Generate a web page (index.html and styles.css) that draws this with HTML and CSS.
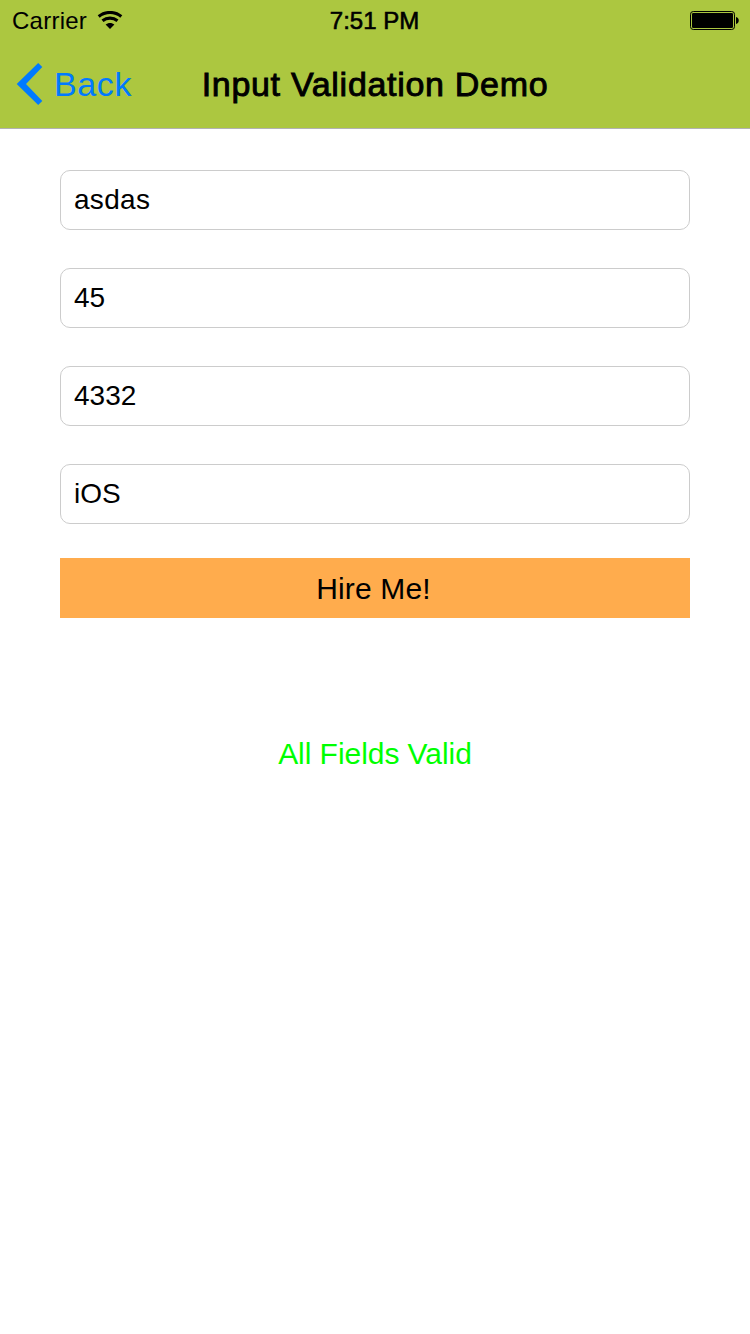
FILE: index.html
```html
<!DOCTYPE html>
<html lang="en">
<head>
<meta charset="utf-8">
<title>Input Validation Demo</title>
<link rel="stylesheet" href="styles.css">
</head>
<body>
<header class="header">
  <div class="status">
    <div class="carrier"><span class="carrier-name">Carrier</span>
      <svg class="wifi" width="26" height="18" viewBox="0 0 26 18" fill="none" stroke="#000" stroke-width="3.1">
        <path d="M1.7 5.5C8.2 .1 17.8 .1 24.3 5.5"/>
        <path d="M5.5 9.8C9.9 6.2 16.1 6.2 20.5 9.8"/>
        <path d="M8.6 13.6C11 11.4 15 11.4 17.4 13.6L13 18Z" fill="#000" stroke="none"/>
      </svg>
    </div>
    <span class="time">7:51 PM</span>
    <svg class="battery" width="50" height="20" viewBox="0 0 50 20">
      <rect x=".5" y=".5" width="44" height="18" rx="2.8" fill="none" stroke="#000"/>
      <rect x="2" y="2" width="41" height="15" rx="1.2"/>
      <path d="M46 6C49.7 6.4 49.7 12.6 46 13Z"/>
    </svg>
  </div>
  <nav class="navbar">
    <a class="back">
      <svg class="chevron" width="26" height="42" viewBox="0 0 26 42"><path d="M21.2 0L25.3 4.1L9 21L25.3 37.9L21.2 42L-.3 21Z" fill="#007aff"/></svg>
      <span class="back-label">Back</span>
    </a>
    <h1 class="title">Input Validation Demo</h1>
  </nav>
</header>
<main class="form">
  <div class="field"><span class="field-name">asdas</span></div>
  <div class="field"><span>45</span></div>
  <div class="field"><span>4332</span></div>
  <div class="field"><span>iOS</span></div>
  <button class="submit"><span class="submit-label">Hire Me!</span></button>
  <p class="message">All Fields Valid</p>
</main>
</body>
</html>
```
FILE: styles.css
```css
* { box-sizing: border-box; }
body {
  margin: 0;
  min-height: 1334px;
  background: #fff;
  color: #000;
  font-family: "Liberation Sans", Arial, sans-serif;
}
.header {
  height: 129px;
  background: #acc740;
  border-bottom: 1px solid #b2b2b2;
}
.status {
  display: grid;
  grid-template-columns: 1fr auto 1fr;
  align-items: center;
  height: 40px;
  padding: 1px 11px 0 12px;
  font-size: 24px;
}
.carrier { display: flex; align-items: center; gap: 10px; }
.carrier-name { letter-spacing: 0.25px; }
.wifi { margin-top: -1px; }
.time {
  margin: 0 1px 0 -1px;
  -webkit-text-stroke: 0.6px #000;
}
.battery { justify-self: end; margin-right: -1px; }
.navbar {
  display: grid;
  grid-template-columns: 1fr auto 1fr;
  align-items: center;
  height: 88px;
  padding: 0 17px;
}
.back {
  display: flex;
  align-items: center;
  gap: 11px;
  color: #007aff;
  font-size: 34px;
}
.chevron { overflow: visible; }
.back-label { letter-spacing: 0.6px; }
.title {
  margin: 0;
  font-size: 34px;
  font-weight: 400;
  letter-spacing: 0.7px;
  -webkit-text-stroke: 0.9px #000;
}
.form { padding: 41px 60px 0; }
.field {
  display: flex;
  align-items: center;
  height: 60px;
  margin-bottom: 38px;
  padding: 0 13px;
  border: 1px solid #ccc;
  border-radius: 10px;
  font-size: 28px;
}
.field-name { letter-spacing: 0.3px; }
.submit {
  display: flex;
  align-items: center;
  justify-content: center;
  width: 100%;
  height: 60px;
  margin-top: -4px;
  padding: 2px 3px 0 0;
  border: 0;
  background: #ffac4d;
  color: #000;
  font-family: inherit;
  font-size: 30px;
}
.submit-label { letter-spacing: 0.15px; }
.message {
  margin: 118px 0 0;
  color: #0f0;
  font-size: 30px;
  line-height: 36px;
  letter-spacing: -0.05px;
  text-align: center;
}
```
